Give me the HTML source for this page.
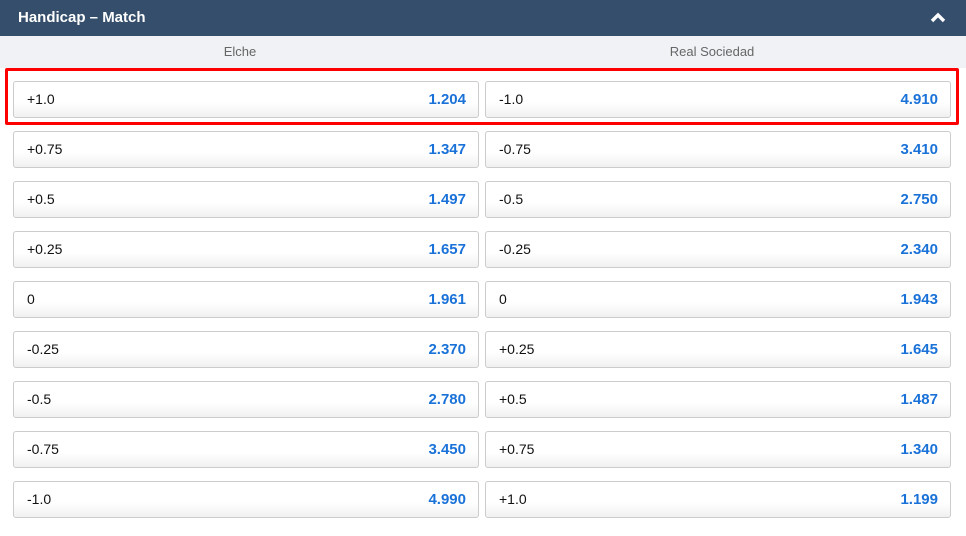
<!DOCTYPE html>
<html><head><style>
body{margin:0;width:966px;height:536px;background:#fff;font-family:"Liberation Sans",Arial,sans-serif;position:relative;overflow:hidden}
.hd{position:absolute;left:0;top:0;width:966px;height:36px;background:#344e6b;color:#fff;font-weight:bold;font-size:15px;line-height:36px}
.hd span{position:absolute;left:18px}
.sub{position:absolute;left:0;top:36px;width:966px;height:32px;background:#f0f2f5;color:#666;font-size:13px;line-height:31px}
.sub div{position:absolute;top:0;width:466px;text-align:center}
.b{position:absolute;height:35px;width:464px;border:1px solid #ccc;border-radius:3px;background:linear-gradient(#fff 60%,#f0f0f0);box-sizing:content-box;font-size:14px;line-height:35px;color:#111}
.b .l{position:absolute;left:13px}
.b .r{position:absolute;right:12px;color:#1a72d8;font-weight:bold;font-size:15px}
.red{position:absolute;left:5px;top:68px;width:948px;height:51px;border:3px solid #f00;border-radius:2px}
</style></head><body>
<div class="hd"><span>Handicap – Match</span>
<svg style="position:absolute;left:930px;top:11px" width="16" height="12" viewBox="0 0 16 12"><path d="M2 10 L8 4 L14 10" stroke="#fff" stroke-width="3.4" fill="none"/></svg></div>
<div class="sub"><div style="left:7px">Elche</div><div style="left:479px">Real Sociedad</div></div>
<div id="rows"></div>
<div class="red"></div>
<script>
var d=[["+1.0","1.204","-1.0","4.910"],["+0.75","1.347","-0.75","3.410"],["+0.5","1.497","-0.5","2.750"],["+0.25","1.657","-0.25","2.340"],["0","1.961","0","1.943"],["-0.25","2.370","+0.25","1.645"],["-0.5","2.780","+0.5","1.487"],["-0.75","3.450","+0.75","1.340"],["-1.0","4.990","+1.0","1.199"]];
var h="";d.forEach(function(r,i){var t=81+i*50;
h+='<div class="b" style="left:13px;top:'+t+'px"><span class="l">'+r[0]+'</span><span class="r">'+r[1]+'</span></div>';
h+='<div class="b" style="left:485px;top:'+t+'px"><span class="l">'+r[2]+'</span><span class="r">'+r[3]+'</span></div>';});
document.getElementById("rows").innerHTML=h;
</script>
</body></html>
